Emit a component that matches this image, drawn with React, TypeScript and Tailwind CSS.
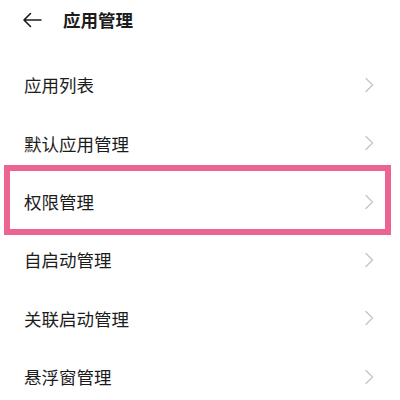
import React from "react";

const items = ["应用列表", "默认应用管理", "权限管理", "自启动管理", "关联启动管理", "悬浮窗管理"];

function Chevron() {
  return (
    <svg width="10" height="16" viewBox="0 0 10 16" fill="none">
      <polyline points="2,1.5 8.5,8 2,14.5" stroke="#c6c6c6" strokeWidth="1.4" strokeLinecap="round" strokeLinejoin="round" />
    </svg>
  );
}

export default function App() {
  return (
    <div
      className="w-[400px] h-[400px] overflow-hidden bg-white text-[#1c1c1c]"
      style={{ fontFamily: '"Noto Sans CJK SC", "Noto Sans", sans-serif' }}
    >
      <div className="h-[40px] flex items-center">
        <div className="w-[63px] pl-[22px] flex items-center">
          <svg width="20" height="16" viewBox="0 0 20 16" fill="none">
            <path d="M19 8H2M8.5 1.5L2 8l6.5 6.5" stroke="#1c1c1c" strokeWidth="1.6" strokeLinecap="round" strokeLinejoin="round" />
          </svg>
        </div>
        <div className="text-[17.5px] font-bold leading-none">应用管理</div>
      </div>
      <div className="mt-4">
        {items.map((t, i) => (
          <div key={t} className="relative h-[58.3px] flex items-center justify-between pl-[24px] pr-[26px]">
            <span className="text-[17.5px] leading-none">{t}</span>
            <Chevron />
            {i === 2 && (
              <div className="absolute top-[-8px] bottom-[-4px] left-[4px] right-[9px] border-[6px] border-[#ec6592] pointer-events-none" />
            )}
          </div>
        ))}
      </div>
    </div>
  );
}
